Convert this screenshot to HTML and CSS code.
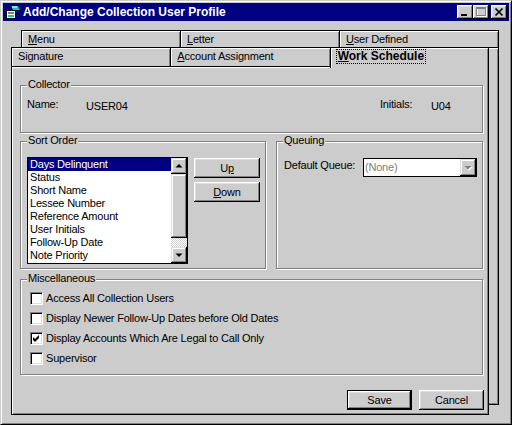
FILE: index.html
```html
<!DOCTYPE html>
<html>
<head>
<meta charset="utf-8">
<link rel="stylesheet" href="styles.css">
</head>
<body>
<div class="window">
  <div class="titlebar">
    <svg class="app-icon" width="16" height="16" viewBox="0 0 16 16">
      <path d="M5.5 1.5 L13.5 1.5 L15.5 6.5 L7.5 6.5 Z" fill="#00c8c8" stroke="#000"/>
      <path d="M7 3 L12 3" stroke="#fff"/>
      <rect x="1.5" y="6.5" width="9" height="8" fill="#fff" stroke="#000"/>
      <rect x="3" y="8" width="6" height="2" fill="#808080"/>
      <rect x="3" y="11" width="6" height="2" fill="#00c8c8"/>
    </svg>
    <span class="title">Add/Change Collection User Profile</span>
    <div class="tb-buttons">
      <span class="tb-btn"><svg width="16" height="14" viewBox="0 0 16 14"><rect x="4" y="9" width="6" height="2" fill="#000"/></svg></span>
      <span class="tb-btn"><svg width="16" height="14" viewBox="0 0 16 14"><rect x="4.5" y="3.5" width="9" height="8" fill="none" stroke="#fff"/><rect x="3.5" y="2.5" width="9" height="8" fill="none" stroke="#808080"/><rect x="3" y="3" width="10" height="1" fill="#808080"/></svg></span>
      <span class="tb-btn tb-close"><svg width="16" height="14" viewBox="0 0 16 14"><path d="M4.5 3.5 L11.5 10.5 M11.5 3.5 L4.5 10.5" stroke="#000" stroke-width="1.7"/></svg></span>
    </div>
  </div>

  <div class="sheets">
    <div class="sheet sheet-back">
      <div class="tabrow tabrow-back">
        <div class="tab"><u>M</u>enu</div>
        <div class="tab"><u>L</u>etter</div>
        <div class="tab"><u>U</u>ser Defined</div>
      </div>
      <div class="page page-back"></div>
    </div>

    <div class="sheet sheet-front">
      <div class="tabrow tabrow-front">
        <div class="tab">Signature</div>
        <div class="tab"><u>A</u>ccount Assignment</div>
        <div class="tab tab-active"><span class="focus"><u>W</u>ork Schedule</span></div>
      </div>
      <div class="page page-front">
        <div class="group group-collector">
          <div class="group-title">Collector</div>
          <div class="collector-row">
            <span class="lbl-name">Name:</span>
            <span class="val val-name">USER04</span>
            <span class="lbl-init">Initials:</span>
            <span class="val val-init">U04</span>
          </div>
        </div>

        <div class="group-row">
          <div class="group group-sort">
            <div class="group-title">Sort Order</div>
            <div class="sort-body">
              <div class="listbox">
                <div class="list-items">
                  <div class="item sel">Days Delinquent</div>
                  <div class="item">Status</div>
                  <div class="item">Short Name</div>
                  <div class="item">Lessee Number</div>
                  <div class="item">Reference Amount</div>
                  <div class="item">User Initials</div>
                  <div class="item">Follow-Up Date</div>
                  <div class="item">Note Priority</div>
                </div>
                <div class="scrollbar">
                  <div class="sb-btn"><svg width="14" height="14" viewBox="0 0 14 14"><path d="M7 5 L10.5 8.5 L3.5 8.5 Z" fill="#000"/></svg></div>
                  <div class="sb-thumb"></div>
                  <div class="sb-track"></div>
                  <div class="sb-btn"><svg width="14" height="14" viewBox="0 0 14 14"><path d="M3.5 5.5 L10.5 5.5 L7 9 Z" fill="#000"/></svg></div>
                </div>
              </div>
              <div class="side-buttons">
                <div class="btn btn-side">U<u>p</u></div>
                <div class="btn btn-side"><u>D</u>own</div>
              </div>
            </div>
          </div>

          <div class="group group-queue">
            <div class="group-title">Queuing</div>
            <div class="queue-body">
              <span class="lbl-queue">Default Queue:</span>
              <div class="combo">
                <span class="combo-text">(None)</span>
                <span class="combo-btn"><svg width="16" height="17" viewBox="0 0 16 17"><path d="M5.5 8 L12.5 8 L9 11.5 Z" fill="#fff"/><path d="M4.5 7 L11.5 7 L8 10.5 Z" fill="#808080"/></svg></span>
              </div>
            </div>
          </div>
        </div>

        <div class="group group-misc">
          <div class="group-title">Miscellaneous</div>
          <div class="misc-body">
            <div class="check-row"><span class="cb"></span><span class="cb-label">Access All Collection Users</span></div>
            <div class="check-row"><span class="cb"></span><span class="cb-label">Display Newer Follow-Up Dates before Old Dates</span></div>
            <div class="check-row"><span class="cb"><svg width="9" height="9" viewBox="0 0 9 9"><path d="M1 3 L3 5 L7 1 L7 4 L3 8 L1 6 Z" fill="#000"/></svg></span><span class="cb-label">Display Accounts Which Are Legal to Call Only</span></div>
            <div class="check-row"><span class="cb"></span><span class="cb-label">Supervisor</span></div>
          </div>
        </div>

        <div class="actions">
          <div class="btn btn-default">Save</div>
          <div class="btn">Cancel</div>
        </div>
      </div>
    </div>
  </div>
</div>
</body>
</html>
```

FILE: styles.css
```css
* { box-sizing: border-box; }
html, body { margin: 0; padding: 0; }
body {
  background: #cccccc;
  font-family: "Liberation Sans", Arial, sans-serif;
  font-size: 11px;
  line-height: 13px;
  letter-spacing: -0.2px;
  color: #000;
}
u { text-decoration: underline; text-underline-offset: 1px; }

.window {
  width: 512px;
  height: 425px;
  border: 1px solid;
  border-color: #cccccc #000 #000 #cccccc;
  box-shadow: inset 1px 1px #fff, inset -1px -1px #808080;
  padding: 2px;
  background: #cccccc;
  display: flex;
  flex-direction: column;
}

.titlebar {
  height: 18px;
  background: #000080;
  color: #fff;
  display: flex;
  align-items: center;
  padding: 0 2px;
  font-weight: bold;
  font-size: 12px;
  letter-spacing: 0;
  flex: none;
}
.app-icon { width: 16px; height: 16px; margin-right: 2px; flex: none; }
.title { white-space: nowrap; line-height: 18px; }
.tb-buttons { margin-left: auto; display: flex; }
.tb-btn {
  width: 16px;
  height: 14px;
  background: #cccccc;
  box-shadow: inset -1px -1px #000, inset 1px 1px #fff, inset -2px -2px #808080, inset 2px 2px #dfdfdf;
  display: block;
}
.tb-btn svg { display: block; }
.tb-close { margin-left: 2px; }

.sheets { flex: 1; display: grid; }
.sheet {
  grid-area: 1 / 1;
  width: 478px;
  align-self: start;
  justify-self: start;
  display: flex;
  flex-direction: column;
}
.sheet-back { margin: 9px 0 0 18px; }
.sheet-front { margin: 26px 0 0 8px; }

.tabrow { display: flex; }
.tab {
  flex: 1;
  border: 1px solid #000;
  border-bottom: 0;
  box-shadow: inset 1px 1px #fff, inset -1px 0 #808080;
  background: #cccccc;
  padding: 2px 0 0 6px;
  white-space: nowrap;
}
.tab + .tab { margin-left: -1px; }
.tabrow-back .tab { height: 17px; }
.tabrow-front .tab { height: 19px; }
.tabrow-front .tab.tab-active {
  height: 21px;
  margin-bottom: -2px;
  position: relative;
  z-index: 1;
  padding: 1px 0 0 5px;
  font-weight: bold;
  font-size: 12px;
  letter-spacing: 0;
}
.focus {
  display: inline-block;
  border: 1px dotted #000;
  padding: 0 1px;
  line-height: 13px;
}

.page {
  border: 1px solid #000;
  box-shadow: inset 1px 1px #fff, inset -1px -1px #808080;
  background: #cccccc;
}
.page-back { height: 358px; }
.page-front {
  height: 349px;
  padding: 18px 0 0 8px;
  display: flex;
  flex-direction: column;
}

.group {
  border: 1px solid #808080;
  box-shadow: inset 1px 1px #fff, 1px 1px #fff;
}
.group-title {
  width: fit-content;
  margin: -8px 0 0 6px;
  padding: 0 1px;
  background: #cccccc;
  line-height: 13px;
  height: 13px;
}

.group-collector { width: 463px; height: 48px; }
.collector-row { display: flex; margin: 7px 0 0 6px; align-items: flex-start; }
.lbl-name { width: 59px; flex: none; }
.val { padding-top: 2px; }
.val-name { flex: 1; }
.lbl-init { width: 51px; flex: none; }
.val-init { width: 51px; flex: none; }

.group-row { display: flex; gap: 10px; margin-top: 8px; }
.group-sort { width: 246px; height: 128px; }
.group-queue { width: 207px; height: 128px; }

.sort-body { display: flex; align-items: flex-start; margin: 10px 0 0 6px; }
.listbox {
  width: 161px;
  height: 107px;
  border: 1px solid #000;
  background: #fff;
  display: flex;
}
.list-items { flex: 1; }
.item { height: 13px; padding-left: 2px; white-space: nowrap; }
.item.sel { background: #000080; color: #fff; }
.scrollbar { width: 16px; display: flex; flex-direction: column; }
.sb-btn, .sb-thumb {
  background: #cccccc;
  box-shadow: inset -1px -1px #000, inset 1px 1px #dfdfdf, inset -2px -2px #808080, inset 2px 2px #fff;
}
.sb-btn { height: 16px; display: flex; align-items: center; justify-content: center; }
.sb-btn svg { display: block; }
.sb-thumb { height: 64px; }
.sb-track {
  flex: 1;
  background-color: #fff;
  background-image: repeating-conic-gradient(#cccccc 0 25%, #fff 0 50%);
  background-size: 2px 2px;
}

.side-buttons { display: flex; flex-direction: column; gap: 4px; margin: 1px 0 0 6px; }

.btn {
  width: 65px;
  height: 20px;
  background: #cccccc;
  box-shadow: inset -1px -1px #000, inset 1px 1px #fff, inset -2px -2px #808080, inset 2px 2px #dfdfdf;
  display: flex;
  align-items: center;
  justify-content: center;
  padding-top: 1px;
}
.btn-side { width: 66px; }
.btn-default {
  border: 1px solid #000;
}

.queue-body { display: flex; align-items: flex-start; margin: 11px 0 0 7px; }
.lbl-queue { width: 79px; flex: none; margin-top: 1px; white-space: nowrap; }
.combo {
  width: 114px;
  height: 19px;
  border: 1px solid #000;
  background: #fff;
  display: flex;
}
.combo-text { flex: 1; color: #808080; padding-left: 1px; line-height: 17px; }
.combo-btn {
  width: 16px;
  height: 17px;
  background: #cccccc;
  box-shadow: inset -1px -1px #000, inset 1px 1px #dfdfdf, inset -2px -2px #808080, inset 2px 2px #fff;
}
.combo-btn svg { display: block; }

.group-misc { width: 463px; height: 96px; margin-top: 10px; }
.misc-body { margin: 3px 0 0 9px; }
.check-row { height: 20px; display: flex; align-items: center; }
.cb {
  width: 13px;
  height: 13px;
  flex: none;
  background: #fff;
  border: 1px solid;
  border-color: #808080 #fff #fff #808080;
  box-shadow: inset 1px 1px #000, inset -1px -1px #dfdfdf;
  padding: 1px;
}
.cb svg { display: block; }
.cb-label { margin-left: 3px; white-space: nowrap; }

.actions {
  width: 464px;
  display: flex;
  justify-content: flex-end;
  gap: 7px;
  margin-top: 15px;
}
```
